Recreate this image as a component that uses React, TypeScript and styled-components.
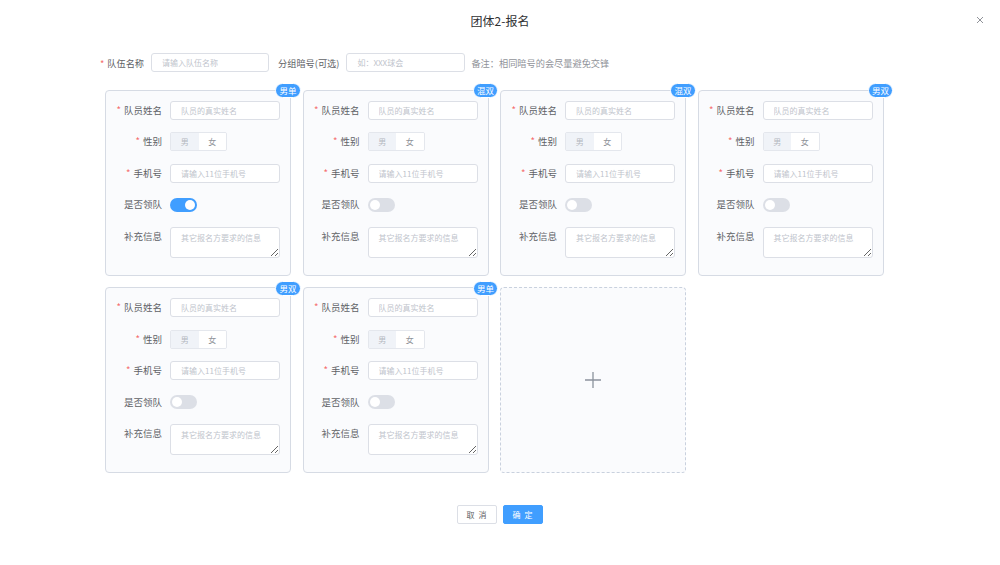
import React from "react";
import styled, { createGlobalStyle } from "styled-components";

const Global = createGlobalStyle`
  html, body { margin: 0; padding: 0; background: #fff; }
  body { font-family: "Noto Sans CJK SC", "Noto Sans", sans-serif; }
  * { box-sizing: border-box; }
`;

const Page = styled.div`
  width: 1000px;
  height: 565px;
  background: #fff;
  display: flex;
  flex-direction: column;
  overflow: hidden;
`;

const Header = styled.div`
  position: relative;
  height: 42px;
  display: flex;
  align-items: center;
  justify-content: center;
`;

const Title = styled.div`
  font-size: 12px;
  color: #303133;
  line-height: 16px;
`;

const Close = styled.button`
  position: absolute;
  top: 15px;
  right: 15px;
  width: 10px;
  height: 10px;
  padding: 0;
  border: 0;
  background: transparent;
  display: flex;
  align-items: center;
  justify-content: center;
`;

const TopRow = styled.div`
  margin-top: 11px;
  padding-left: 100px;
  height: 19px;
  display: flex;
  align-items: center;
`;

const TopLabel = styled.span<{ $required?: boolean }>`
  font-size: 9.2px;
  color: #606266;
  white-space: nowrap;
  margin-right: 7px;
  &::before {
    content: ${(p) => (p.$required ? '"*"' : '""')};
    color: #f56c6c;
    margin-right: 3px;
  }
`;

const Note = styled.span`
  font-size: 9.2px;
  color: #909399;
  margin-left: 6px;
`;

const Input = styled.input<{ $w?: number }>`
  display: block;
  width: ${(p) => (p.$w ? `${p.$w}px` : "100%")};
  height: 19px;
  border: 1px solid #dcdfe6;
  border-radius: 3px;
  background: #fff;
  padding: 0 0 0 10px;
  font-family: inherit;
  font-size: 8px;
  color: #606266;
  outline: none;
  &::placeholder { color: #c0c4cc; }
`;

const TopInput = styled(Input)`
  margin-right: 6px;
`;

const Grid = styled.div`
  margin-top: 17.5px;
  padding-left: 105px;
  display: grid;
  grid-template-columns: repeat(4, 186px);
  column-gap: 11.5px;
  row-gap: 11.5px;
`;

const Card = styled.div`
  position: relative;
  height: 186px;
  border: 1px solid #d6dbe4;
  border-radius: 4px;
  background: #fafbfd;
  padding: 10px 10px 0 0;
  display: flex;
  flex-direction: column;
  gap: 12.5px;
`;

const Badge = styled.span`
  position: absolute;
  top: -7.5px;
  right: -10.5px;
  height: 15px;
  padding: 0 3px;
  border-radius: 8px;
  background: #409eff;
  border: 1px solid #fff;
  color: #fff;
  font-size: 8.5px;
  line-height: 13px;
  white-space: nowrap;
`;

const Row = styled.div<{ $top?: boolean }>`
  display: flex;
  align-items: ${(p) => (p.$top ? "flex-start" : "center")};
  height: ${(p) => (p.$top ? "31px" : "19px")};
`;

const Label = styled.label<{ $required?: boolean }>`
  width: 64px;
  flex: none;
  padding-right: 8px;
  text-align: right;
  font-size: 9.5px;
  line-height: 19px;
  color: #606266;
  white-space: nowrap;
  &::before {
    content: ${(p) => (p.$required ? '"*"' : '""')};
    color: #f56c6c;
    margin-right: 3px;
  }
`;

const Field = styled.div`
  width: 110px;
  display: flex;
`;

const Segmented = styled.div`
  display: flex;
  width: 57px;
  height: 19px;
  border: 1px solid #e4e7ed;
  border-radius: 2px;
  overflow: hidden;
`;

const Seg = styled.span<{ $on?: boolean }>`
  flex: 1;
  display: flex;
  align-items: center;
  justify-content: center;
  font-size: 8px;
  background: ${(p) => (p.$on ? "#f0f3f8" : "#fff")};
  color: ${(p) => (p.$on ? "#b4b8bf" : "#909399")};
`;

const Switch = styled.span<{ $on?: boolean }>`
  position: relative;
  display: block;
  width: 27px;
  height: 14px;
  border-radius: 7px;
  background: ${(p) => (p.$on ? "#409eff" : "#dcdfe6")};
  &::after {
    content: "";
    position: absolute;
    top: 2px;
    left: ${(p) => (p.$on ? "15px" : "2px")};
    width: 10px;
    height: 10px;
    border-radius: 50%;
    background: #fff;
  }
`;

const TextArea = styled.textarea`
  display: block;
  width: 110px;
  height: 31px;
  border: 1px solid #dcdfe6;
  border-radius: 3px;
  background: #fff;
  padding: 4px 10px;
  font-family: inherit;
  font-size: 8px;
  line-height: 11px;
  outline: none;
  resize: vertical;
  &::placeholder { color: #c0c4cc; }
`;

const AddCard = styled.div`
  height: 186px;
  border: 1px dashed #c9d1de;
  border-radius: 4px;
  background: #fafbfd;
  display: flex;
  align-items: center;
  justify-content: center;
`;

const Footer = styled.div`
  margin-top: 32px;
  display: flex;
  justify-content: center;
  gap: 6px;
`;

const Button = styled.button<{ $primary?: boolean }>`
  width: 40px;
  height: 19px;
  padding: 0;
  border-radius: 2px;
  border: 1px solid ${(p) => (p.$primary ? "#409eff" : "#dcdfe6")};
  background: ${(p) => (p.$primary ? "#409eff" : "#fff")};
  color: ${(p) => (p.$primary ? "#fff" : "#606266")};
  font-family: inherit;
  font-size: 8px;
  letter-spacing: 1px;
  white-space: pre;
`;

type Member = { type: string; leader: boolean };

const members: Member[] = [
  { type: "男单", leader: true },
  { type: "混双", leader: false },
  { type: "混双", leader: false },
  { type: "男双", leader: false },
  { type: "男双", leader: false },
  { type: "男单", leader: false },
];

function MemberCard({ m }: { m: Member }) {
  return (
    <Card>
      <Badge>{m.type}</Badge>
      <Row>
        <Label $required>队员姓名</Label>
        <Field>
          <Input placeholder="队员的真实姓名" readOnly />
        </Field>
      </Row>
      <Row>
        <Label $required>性别</Label>
        <Segmented>
          <Seg $on>男</Seg>
          <Seg>女</Seg>
        </Segmented>
      </Row>
      <Row>
        <Label $required>手机号</Label>
        <Field>
          <Input placeholder="请输入11位手机号" readOnly />
        </Field>
      </Row>
      <Row>
        <Label>是否领队</Label>
        <Switch $on={m.leader} />
      </Row>
      <Row $top>
        <Label>补充信息</Label>
        <TextArea placeholder="其它报名方要求的信息" readOnly />
      </Row>
    </Card>
  );
}

export default function App() {
  return (
    <>
      <Global />
      <Page>
        <Header>
          <Title>团体2-报名</Title>
          <Close aria-label="close">
            <svg width="8" height="8" viewBox="0 0 8 8">
              <path d="M1 1L7 7M7 1L1 7" stroke="#909399" strokeWidth="1" />
            </svg>
          </Close>
        </Header>
        <TopRow>
          <TopLabel $required>队伍名称</TopLabel>
          <TopInput $w={118} placeholder="请输入队伍名称" readOnly />
          <TopLabel>分组暗号(可选)</TopLabel>
          <Input $w={119} placeholder="如：XXX球会" readOnly />
          <Note>备注：相同暗号的会尽量避免交锋</Note>
        </TopRow>
        <Grid>
          {members.map((m, i) => (
            <MemberCard key={i} m={m} />
          ))}
          <AddCard>
            <svg width="18" height="18" viewBox="0 0 18 18">
              <path d="M9 1V17M1 9H17" stroke="#8c939d" strokeWidth="1.3" />
            </svg>
          </AddCard>
        </Grid>
        <Footer>
          <Button>取 消</Button>
          <Button $primary>确 定</Button>
        </Footer>
      </Page>
    </>
  );
}
